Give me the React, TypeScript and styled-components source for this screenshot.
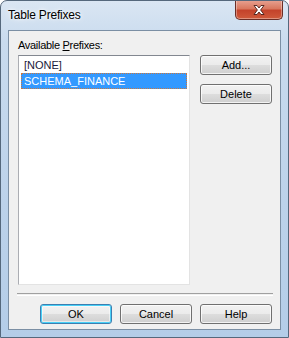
import React from "react";
import styled, { createGlobalStyle } from "styled-components";

const GlobalStyle = createGlobalStyle`
  html, body {
    margin: 0;
    padding: 0;
    background: #ffffff;
  }
  body {
    font-family: "Liberation Sans", Arial, sans-serif;
  }
`;

const Window = styled.div`
  position: relative;
  box-sizing: border-box;
  width: 289px;
  height: 338px;
  padding: 29px 7px 7px 7px;
  border: 1px solid #55687c;
  border-radius: 7px 7px 0 0;
  background: linear-gradient(180deg, #dae6f3 0%, #c9dbee 12%, #bcd2ea 60%, #b4cde8 100%);
  overflow: hidden;
`;

const TitleText = styled.div`
  position: absolute;
  left: 7px;
  top: 7px;
  font-size: 12px;
  line-height: 15px;
  color: #000000;
  letter-spacing: -0.2px;
  text-shadow: 0 0 6px #ffffff, 0 0 3px #ffffff;
`;

const CloseButton = styled.div`
  position: absolute;
  top: -1px;
  right: 5px;
  box-sizing: border-box;
  width: 48px;
  height: 20px;
  display: flex;
  align-items: center;
  justify-content: center;
  border: 1px solid #6b2e26;
  border-top: none;
  border-radius: 0 0 5px 5px;
  background: linear-gradient(180deg, #e8a393 0%, #d9785f 45%, #c4432b 55%, #cf5a3b 100%);
  box-shadow: inset 0 0 0 1px rgba(255, 255, 255, 0.35);
`;

const Client = styled.div`
  box-sizing: border-box;
  width: 273px;
  height: 300px;
  border: 1px solid #7b8fa4;
  background: #f0f0f0;
  display: flex;
  flex-direction: column;
  padding: 7px 8px 0 8px;
  font-size: 11px;
  color: #000000;
`;

const Label = styled.div`
  line-height: 15px;
  height: 17px;
  padding-left: 1px;
  letter-spacing: -0.3px;

  u {
    text-decoration: underline;
    text-underline-offset: 1px;
  }
`;

const Body = styled.div`
  display: flex;
  align-items: flex-start;
  gap: 10px;
  padding-left: 1px;
`;

const ListBox = styled.ul`
  box-sizing: border-box;
  display: block;
  list-style: none;
  margin: 0;
  width: 174px;
  height: 230px;
  background: #ffffff;
  border: 1px solid #e3e3e3;
  border-top-color: #828790;
  border-left-color: #abadb3;
  padding: 1px 2px;
`;

const ListItem = styled.li<{ $selected?: boolean }>`
  display: block;
  box-sizing: border-box;
  height: 16px;
  margin: 0;
  padding: 0 2px;
  line-height: 14px;
  white-space: nowrap;
  color: ${(p) => (p.$selected ? "#ffffff" : "#1a1a3a")};
  background: ${(p) => (p.$selected ? "#3399ff" : "transparent")};
  border: 1px ${(p) => (p.$selected ? "dotted #c9773f" : "solid transparent")};
`;

const SideButtons = styled.div`
  display: flex;
  flex-direction: column;
  gap: 9px;
`;

const Button = styled.button<{ $isDefault?: boolean }>`
  box-sizing: border-box;
  width: 72px;
  height: 20px;
  padding: 0;
  margin: 0;
  font-family: "Liberation Sans", Arial, sans-serif;
  font-size: 11px;
  color: #000000;
  border: 1px solid ${(p) => (p.$isDefault ? "#3c7fb1" : "#707070")};
  border-radius: 3px;
  background: linear-gradient(180deg, #f2f2f2 0%, #ebebeb 50%, #dddddd 51%, #cfcfcf 100%);
  box-shadow: ${(p) =>
    p.$isDefault
      ? "inset 0 0 0 1px #48d0f7, inset 0 0 0 2px rgba(255,255,255,0.5)"
      : "inset 0 0 0 1px rgba(255,255,255,0.75)"};
`;

const Separator = styled.div`
  margin: 8px 0 0 0;
  height: 1px;
  border-top: 1px solid #a0a0a0;
  border-bottom: 1px solid #ffffff;
  width: 256px;
`;

const Footer = styled.div`
  display: flex;
  justify-content: flex-end;
  gap: 8px;
  margin-top: 8px;
`;

const CloseGlyph = () => (
  <svg width="14" height="12" viewBox="0 0 14 12">
    <path
      d="M2 1.5 L5 1.5 L7 4 L9 1.5 L12 1.5 L8.6 6 L12 10.5 L9 10.5 L7 8 L5 10.5 L2 10.5 L5.4 6 Z"
      fill="#ffffff"
      stroke="#4a1d16"
      strokeWidth="0.9"
      strokeLinejoin="round"
    />
  </svg>
);

export default function App() {
  return (
    <>
      <GlobalStyle />
      <Window>
        <TitleText>Table Prefixes</TitleText>
        <CloseButton>
          <CloseGlyph />
        </CloseButton>
        <Client>
          <Label>
            Available <u>P</u>refixes:
          </Label>
          <Body>
            <ListBox>
              <ListItem>[NONE]</ListItem>
              <ListItem $selected>SCHEMA_FINANCE</ListItem>
            </ListBox>
            <SideButtons>
              <Button>Add...</Button>
              <Button>Delete</Button>
            </SideButtons>
          </Body>
          <Separator />
          <Footer>
            <Button $isDefault>OK</Button>
            <Button>Cancel</Button>
            <Button>Help</Button>
          </Footer>
        </Client>
      </Window>
    </>
  );
}
